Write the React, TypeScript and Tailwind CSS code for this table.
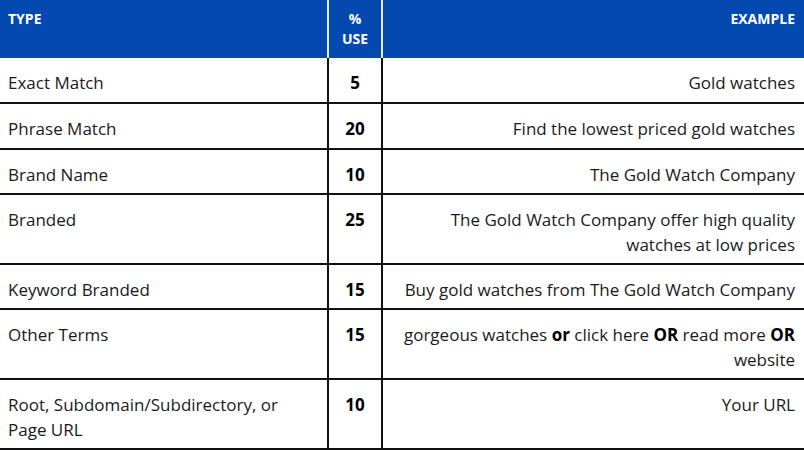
import React from "react";

type Row = {
  type: string;
  use: string;
  example: React.ReactNode;
  h: string;
};

const rows: Row[] = [
  { type: "Exact Match", use: "5", example: "Gold watches", h: "h-[46px]" },
  { type: "Phrase Match", use: "20", example: "Find the lowest priced gold watches", h: "h-[46px]" },
  { type: "Brand Name", use: "10", example: "The Gold Watch Company", h: "h-[45px]" },
  {
    type: "Branded",
    use: "25",
    example: (
      <>
        The Gold Watch Company offer high quality
        <br />
        watches at low prices
      </>
    ),
    h: "h-[70px]",
  },
  { type: "Keyword Branded", use: "15", example: "Buy gold watches from The Gold Watch Company", h: "h-[45px]" },
  {
    type: "Other Terms",
    use: "15",
    example: (
      <>
        gorgeous watches <b className="text-black">or</b> click here <b className="text-black">OR</b> read more{" "}
        <b className="text-black">OR</b>
        <br />
        website
      </>
    ),
    h: "h-[70px]",
  },
  {
    type: "Root, Subdomain/Subdirectory, or Page URL",
    use: "10",
    example: "Your URL",
    h: "h-[70px]",
  },
];

export default function App() {
  return (
    <div className="h-[450px] w-[804px] overflow-hidden bg-white font-['Open_Sans',sans-serif] text-[#1a1a1a]">
      {/* header */}
      <div className="grid h-[58px] grid-cols-[327px_56px_1fr] bg-[#0449b0] text-[14px] font-bold leading-[20px] text-white">
        <div className="px-[8px] pt-[9px]">TYPE</div>
        <div className="border-x-2 border-white/90 pt-[9px] text-center">
          %
          <br />
          USE
        </div>
        <div className="px-[9px] pt-[9px] text-right">EXAMPLE</div>
      </div>

      {rows.map((r) => (
        <div
          key={r.type}
          className={`grid grid-cols-[327px_56px_1fr] border-b-2 border-[#111] text-[17px] leading-[25px] ${r.h}`}
        >
          <div className="w-[300px] px-[8px] pt-[12px]">{r.type}</div>
          <div className="border-x-2 border-[#111] pt-[12px] text-center font-bold text-black">{r.use}</div>
          <div className="px-[9px] pt-[12px] text-right">{r.example}</div>
        </div>
      ))}
    </div>
  );
}
